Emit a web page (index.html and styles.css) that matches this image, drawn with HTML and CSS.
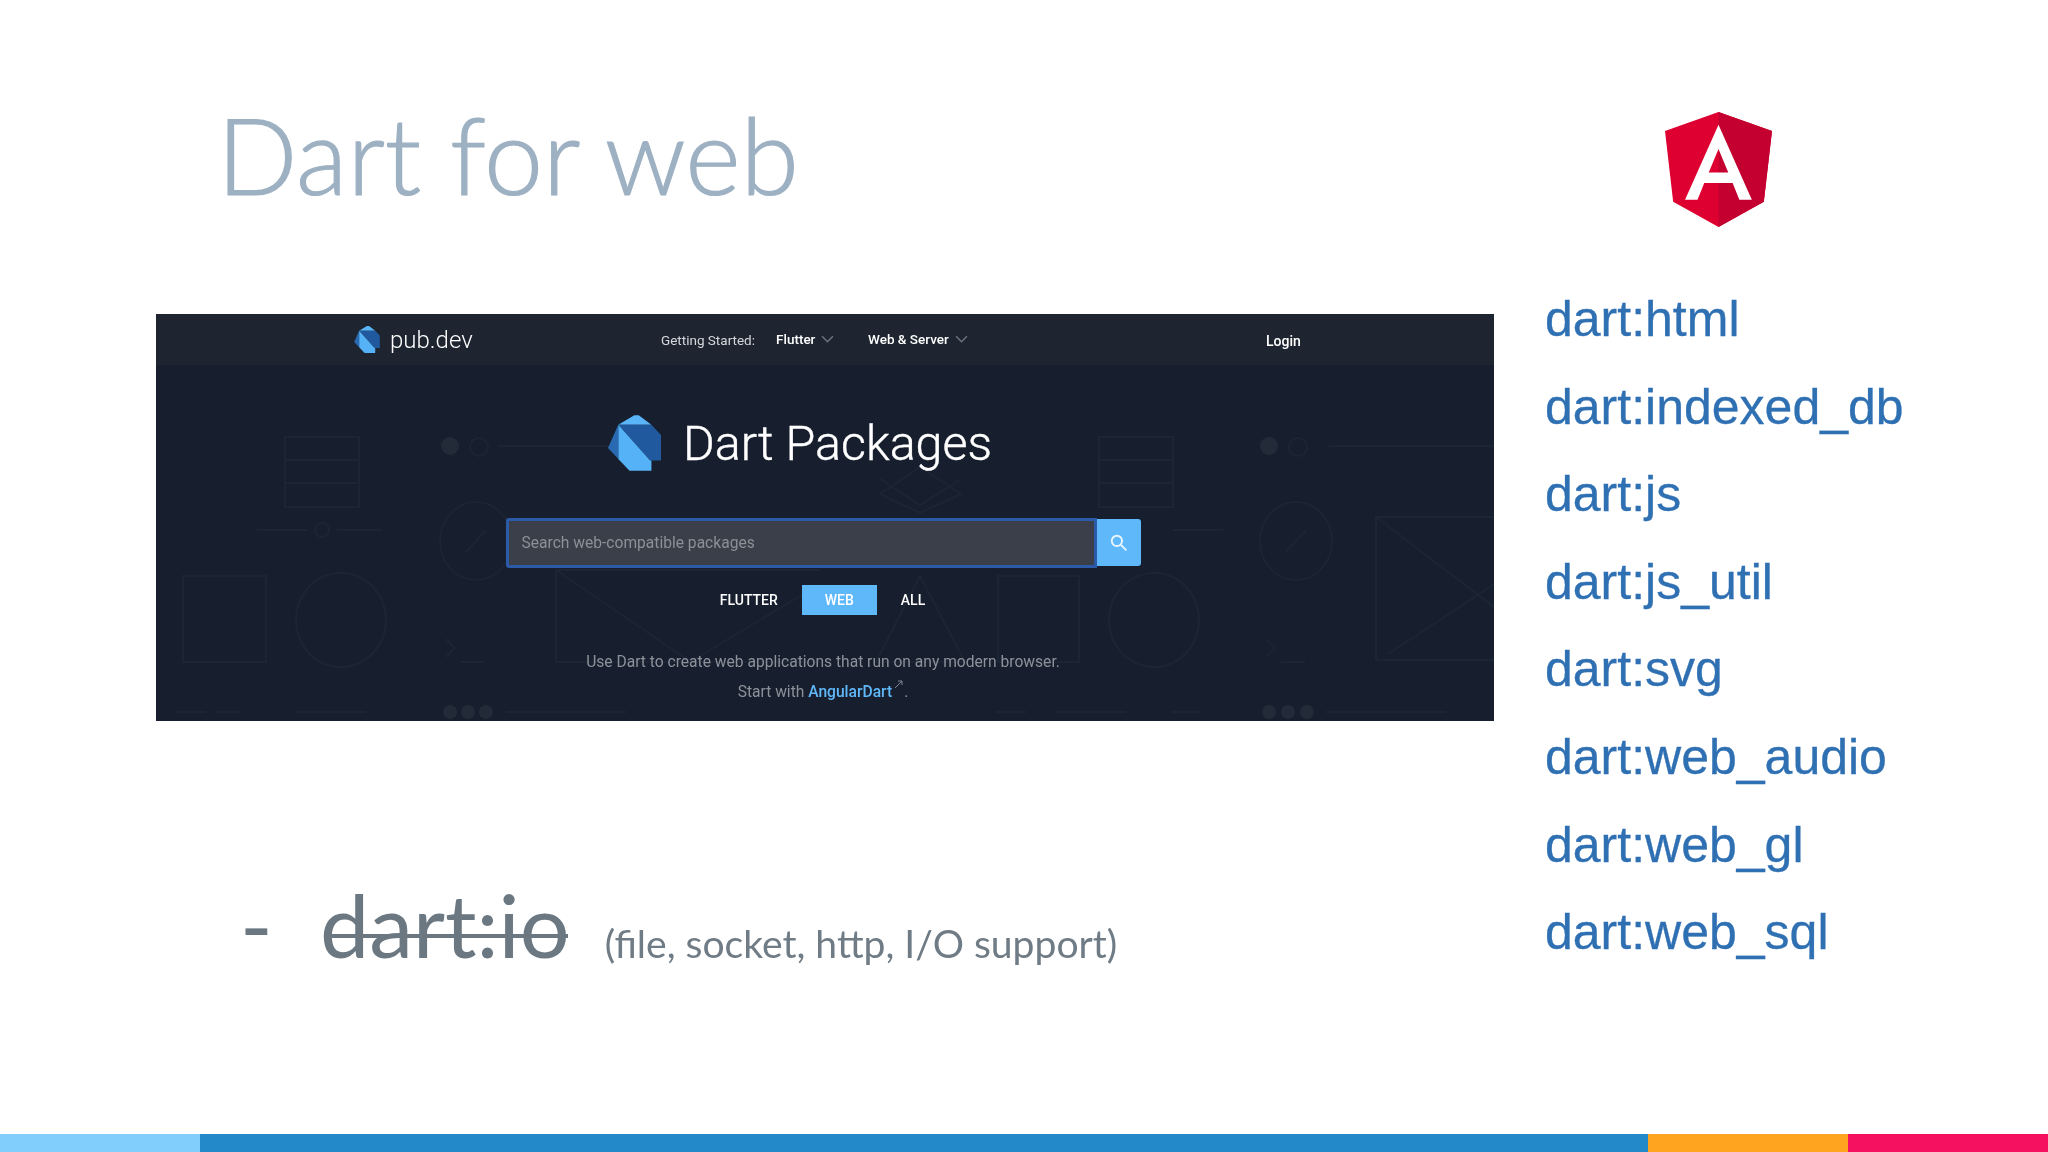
FILE: index.html
```html
<!DOCTYPE html>
<html lang="en">
<head>
<meta charset="utf-8">
<title>Dart for web</title>
<link rel="stylesheet" href="styles.css">
</head>
<body>
<div class="slide">
  <main class="content">
    <section class="left">
      <h1 class="title">Dart for web</h1>
      <div class="shot">
        <svg class="pattern" viewBox="0 0 1338 407" aria-hidden="true">
          <g fill="none" stroke="#1c2533" stroke-width="2">
            <g id="tile">
              <rect x="129" y="123" width="74" height="70"/><path d="M129 146h74M129 169h74"/>
              <circle cx="294" cy="132" r="9" fill="#232b38" stroke="none"/><circle cx="323" cy="133" r="9"/><path d="M342 132h121M101 216h50M181 216h45"/><circle cx="166" cy="216" r="7"/>
              <ellipse cx="320" cy="227" rx="36" ry="39"/><path d="M310 238l20-22"/>
              <rect x="27" y="262" width="83" height="86"/><ellipse cx="185" cy="306" rx="45" ry="47"/>
              <path d="M290 325l9 9-9 9M305 348h24"/>
              <circle cx="294" cy="398" r="7" fill="#232b38" stroke="none"/><circle cx="312" cy="398" r="7" fill="#232b38" stroke="none"/><circle cx="330" cy="398" r="7" fill="#232b38" stroke="none"/><path d="M350 398h120M20 398h30M60 398h25M140 398h70"/>
            </g>
            <path d="M400 256h264M400 256v92h264M400 256l135 92M664 270l-130 78M764 262l-44 86h89z"/>
            <rect x="842" y="262" width="81" height="86"/><ellipse cx="998" cy="306" rx="45" ry="47"/>
            <path d="M724 180l40-27 41 27-41 19zM724 165l40 26 41-26M1140 340"/>
            <rect x="943" y="123" width="74" height="70"/><path d="M943 146h74M943 169h74M1017 216h50"/>
            <circle cx="1113" cy="132" r="9" fill="#232b38" stroke="none"/><circle cx="1142" cy="133" r="9"/><path d="M1173 132h165"/>
            <ellipse cx="1140" cy="227" rx="36" ry="39"/><path d="M1130 238l20-22"/>
            <path d="M1220 346V203h118M1220 203l118 90M1220 346h118M1232 340l106-70"/>
            <path d="M1110 325l9 9-9 9M1125 348h24"/>
            <circle cx="1113" cy="398" r="7" fill="#232b38" stroke="none"/><circle cx="1132" cy="398" r="7" fill="#232b38" stroke="none"/><circle cx="1151" cy="398" r="7" fill="#232b38" stroke="none"/><path d="M1170 398h120M840 398h30M900 398h70M1015 398h30"/>
          </g>
        </svg>
        <nav class="nav">
          <div class="brand">
            <svg class="dart dart-s" viewBox="145 47 155 163" aria-hidden="true"><use href="#dart-mark"/></svg>
            <span>pub.dev</span>
          </div>
          <span class="nav-label">Getting Started:</span>
          <span class="nav-item nav-flutter">Flutter<svg class="chev" viewBox="0 0 12 7"><path d="M1 1l5 5 5-5"/></svg></span>
          <span class="nav-item nav-web">Web &amp; Server<svg class="chev" viewBox="0 0 12 7"><path d="M1 1l5 5 5-5"/></svg></span>
          <span class="nav-item nav-login">Login</span>
        </nav>
        <div class="hero">
          <div class="hero-head">
            <svg class="dart dart-l" viewBox="145 47 155 163" aria-hidden="true">
              <g id="dart-mark">
                <polygon fill="#59b5f8" points="175,75 222,47 235,47 272,75"/>
                <polygon fill="#20599e" points="175,75 272,75 300,105 300,180 268,180"/>
                <polygon fill="#56b2f6" points="175,75 268,180 272,180 272,210 208,210 175,175"/>
                <polygon fill="#2a6ab2" points="175,75 145,143 208,210 175,175"/>
              </g>
            </svg>
            <span>Dart Packages</span>
          </div>
          <div class="search">
            <div class="search-input">Search web-compatible packages</div>
            <div class="search-btn">
              <svg viewBox="0 0 24 24" aria-hidden="true"><circle cx="10" cy="10" r="6.5"/><path d="M15 15l7 7"/></svg>
            </div>
          </div>
          <div class="tabs">
            <span class="tab">FLUTTER</span>
            <span class="tab tab-on">WEB</span>
            <span class="tab">ALL</span>
          </div>
          <p class="desc">Use Dart to create web applications that run on any modern browser.</p>
          <p class="desc desc-2">Start with <span class="link">AngularDart</span><svg class="ext" viewBox="0 0 9 9"><path d="M1 8l7-7M4 1h4v4"/></svg>.</p>
        </div>
      </div>
      <div class="removed">
        <span class="dash">-</span>
        <span class="lib">dart:io</span>
        <span class="note">(file, socket, http, I/O support)</span>
      </div>
    </section>
    <aside class="right">
      <svg class="angular" viewBox="31.9 30 186.2 200" aria-label="Angular">
        <polygon fill="#DD0031" points="125,30 31.9,63.2 46.1,186.3 125,230 203.9,186.3 218.1,63.2"/>
        <polygon fill="#C3002F" points="125,30 125,230 203.9,186.3 218.1,63.2"/>
        <path fill="#FFFFFF" d="M125,52.1L66.8,182.6h21.7l11.7-29.2h49.4l11.7,29.2h21.7L125,52.1z M142,135.4H108l17-40.9L142,135.4z"/>
      </svg>
      <ul class="libs">
        <li>dart:html</li>
        <li>dart:indexed_db</li>
        <li>dart:js</li>
        <li>dart:js_util</li>
        <li>dart:svg</li>
        <li>dart:web_audio</li>
        <li>dart:web_gl</li>
        <li>dart:web_sql</li>
      </ul>
    </aside>
  </main>
  <footer class="stripe">
    <div class="s-sky"></div>
    <div class="s-blue"></div>
    <div class="s-orange"></div>
    <div class="s-pink"></div>
  </footer>
</div>
</body>
</html>
```
FILE: styles.css
```css
* { box-sizing: border-box; }
html, body { margin: 0; padding: 0; }
body { width: 2048px; height: 1152px; background: #fff; overflow: hidden; font-family: "Lato", sans-serif; }
.slide { width: 2048px; height: 1152px; display: flex; flex-direction: column; }
.content { flex: 1; display: flex; }
.left { width: 1494px; padding-left: 156px; }
.title { margin: 0; height: 314px; padding: 89px 0 0 61px; font-family: "Lato", sans-serif; font-weight: 300; font-size: 106px; -webkit-text-stroke: 1.2px #9db1c3; line-height: 130px; color: #9db1c3; filter: blur(0.3px); }
.shot { position: relative; width: 1338px; height: 407px; background: #171f2e; overflow: hidden; color: #fff; font-family: "Roboto", sans-serif; filter: blur(0.5px); }
.pattern { position: absolute; inset: 0; width: 100%; height: 100%; }
.nav { position: relative; height: 51px; background: #1f2530; display: flex; align-items: center; font-size: 14px; }
.brand { display: flex; align-items: center; gap: 10px; margin-left: 198px; width: 307px; font-size: 24px; font-weight: 300; }
.dart { display: block; }
.dart-s { width: 26px; height: 27px; }
.dart-l { width: 53px; height: 56px; }
.nav-label { width: 115px; color: #d5d8dc; font-size: 13.5px; }
.nav-item { display: flex; align-items: center; gap: 6px; font-weight: 500; font-size: 13.5px; margin-top: -2px; }
.nav-flutter { width: 92px; }
.nav-web { width: 398px; }
.nav-login { margin-top: 2px; font-size: 14px; }
.chev { width: 13px; height: 8px; fill: none; stroke: #6d747e; stroke-width: 1.4; }
.hero { position: relative; display: flex; flex-direction: column; align-items: center; }
.hero-head { display: flex; align-items: center; gap: 22px; height: 56px; margin-top: 50px; margin-left: -50px; font-size: 48.4px; font-weight: 300; -webkit-text-stroke: 0.4px #fff; }
.search { display: flex; width: 635px; height: 50px; margin-top: 47px; margin-left: -4px; }
.search-input { flex: 1; background: #3a3f49; border: 3px solid #2a5aa8; border-radius: 3px 0 0 3px; padding-left: 13px; color: #8c9097; font-size: 15.6px; line-height: 44px; }
.search-btn { width: 44px; margin: 1px 0 2px; background: #5fb8f9; border-radius: 0 3px 3px 0; display: flex; align-items: center; justify-content: center; }
.search-btn svg { width: 19px; height: 19px; fill: none; stroke: #e9f5fe; stroke-width: 2.4; }
.tabs { display: flex; height: 30px; margin-top: 17px; margin-left: -5px; }
.tab { padding: 0 24px; display: flex; align-items: center; justify-content: center; font-size: 14px; font-weight: 500; }
.tab-on { width: 75px; padding: 0; background: #5fb8f9; }
.desc { margin: 38px 0 0 -4px; height: 19px; line-height: 19px; font-size: 15.6px; color: #8d929a; }
.desc-2 { margin-top: 8px; }
.link { color: #5fb8f9; font-weight: 500; }
.ext { width: 9px; height: 9px; margin: 0 1px 8px 2px; fill: none; stroke: #7f8790; stroke-width: 1; }
.removed { display: flex; align-items: baseline; padding: 153px 0 0 84px; color: #6b7882; filter: blur(0.4px); }
.dash { font-size: 88px; line-height: 100px; width: 80px; }
.lib { position: relative; font-size: 88px; line-height: 100px; margin-right: 35px; }
.lib::after { content: ""; position: absolute; left: 10px; right: 2px; top: 60px; height: 4px; background: #6b7882; }
.note { font-size: 39.1px; color: #6f7b85; }
.right { width: 554px; padding: 112px 0 0 51px; }
.angular { display: block; width: 107px; height: 115px; margin-left: 120px; }
.libs { list-style: none; margin: 49px 0 0; padding: 0; font-family: "Liberation Sans", sans-serif; font-size: 50px; line-height: 87.6px; color: #2f70b3; -webkit-text-stroke: 0.3px #2f70b3; filter: blur(0.6px); }
.stripe { display: flex; height: 18px; }
.s-sky { width: 200px; background: #81cdfb; }
.s-blue { flex: 1; background: #2389c9; }
.s-orange { width: 200px; background: #ffa41f; }
.s-pink { width: 200px; background: #f5115f; }
```
